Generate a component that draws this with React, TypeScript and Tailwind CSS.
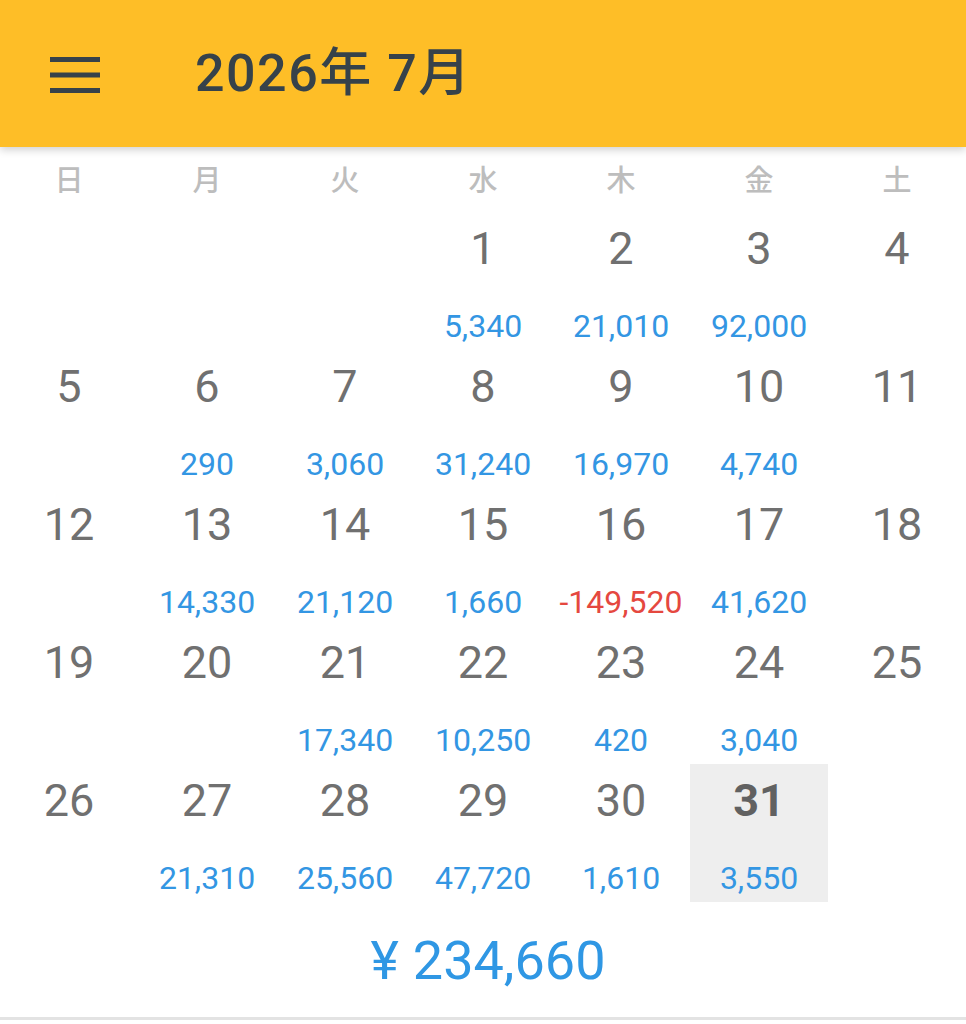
import React from 'react';

type Day = { day: number; amount?: number; today?: boolean };

const WEEKDAYS = ['日', '月', '火', '水', '木', '金', '土'];

// July 2026 starts on a Wednesday
const LEADING_BLANKS = 3;

const AMOUNTS: Record<number, number> = {
  1: 5340,
  2: 21010,
  3: 92000,
  6: 290,
  7: 3060,
  8: 31240,
  9: 16970,
  10: 4740,
  13: 14330,
  14: 21120,
  15: 1660,
  16: -149520,
  17: 41620,
  21: 17340,
  22: 10250,
  23: 420,
  24: 3040,
  27: 21310,
  28: 25560,
  29: 47720,
  30: 1610,
  31: 3550,
};

const FONT = { fontFamily: 'Roboto, "Noto Sans CJK JP", sans-serif' };

function buildCells(): (Day | null)[] {
  const cells: (Day | null)[] = [];
  for (let i = 0; i < LEADING_BLANKS; i++) cells.push(null);
  for (let d = 1; d <= 31; d++) {
    cells.push({ day: d, amount: AMOUNTS[d], today: d === 31 });
  }
  return cells;
}

function formatAmount(n: number) {
  return n.toLocaleString('en-US');
}

function MenuIcon() {
  return (
    <svg width="50" height="36" viewBox="0 0 50 36" className="block">
      <rect x="0" y="0" width="50" height="5" fill="#37424a" />
      <rect x="0" y="15.5" width="50" height="5" fill="#37424a" />
      <rect x="0" y="31" width="50" height="5" fill="#37424a" />
    </svg>
  );
}

function DayCell({ cell }: { cell: Day | null }) {
  if (!cell) return <div className="h-[138px]" />;
  const negative = (cell.amount ?? 0) < 0;
  return (
    <div
      className={`h-[138px] flex flex-col items-center ${
        cell.today ? 'bg-[#eeeeee]' : ''
      }`}
    >
      <div
        className={`mt-[11px] h-[50px] flex items-center text-[45px] leading-none ${
          cell.today ? 'font-bold text-[#616161]' : 'text-[#707070]'
        }`}
      >
        {cell.day}
      </div>
      {cell.amount !== undefined && (
        <div
          className={`mt-[37px] text-[32px] leading-none ${
            negative ? 'text-[#e5483f]' : 'text-[#3396e3]'
          }`}
        >
          {formatAmount(cell.amount)}
        </div>
      )}
    </div>
  );
}

export default function App() {
  const cells = buildCells();

  return (
    <div className="w-[966px] h-[1024px] bg-white overflow-hidden" style={FONT}>
      <header className="relative z-10 h-[147px] bg-[#febe27] flex items-center shadow-[0_3px_8px_rgba(0,0,0,0.18)]">
        <div className="ml-[50px] mt-[2px]">
          <MenuIcon />
        </div>
        <h1 className="ml-[95px] text-[52px] font-medium text-[#36424a] leading-none tracking-[1.5px]">
          2026年 7月
        </h1>
      </header>

      <div className="border-b-[3px] border-[#e3e3e3]">
        <div className="grid grid-cols-7 h-[65px] items-center pt-[4px]">
          {WEEKDAYS.map((w) => (
            <div
              key={w}
              className="text-center text-[29px] font-medium text-[#bdbdbd] leading-none"
            >
              {w}
            </div>
          ))}
        </div>

        <div className="grid grid-cols-7">
          {cells.map((cell, i) => (
            <DayCell key={i} cell={cell} />
          ))}
        </div>

        <div className="h-[115px] flex items-center justify-center pt-[3px]">
          <span className="text-[54px] text-[#2f97e4] leading-none ml-[10px]">
            ¥<span className="ml-[14px]">234,660</span>
          </span>
        </div>
      </div>
    </div>
  );
}
